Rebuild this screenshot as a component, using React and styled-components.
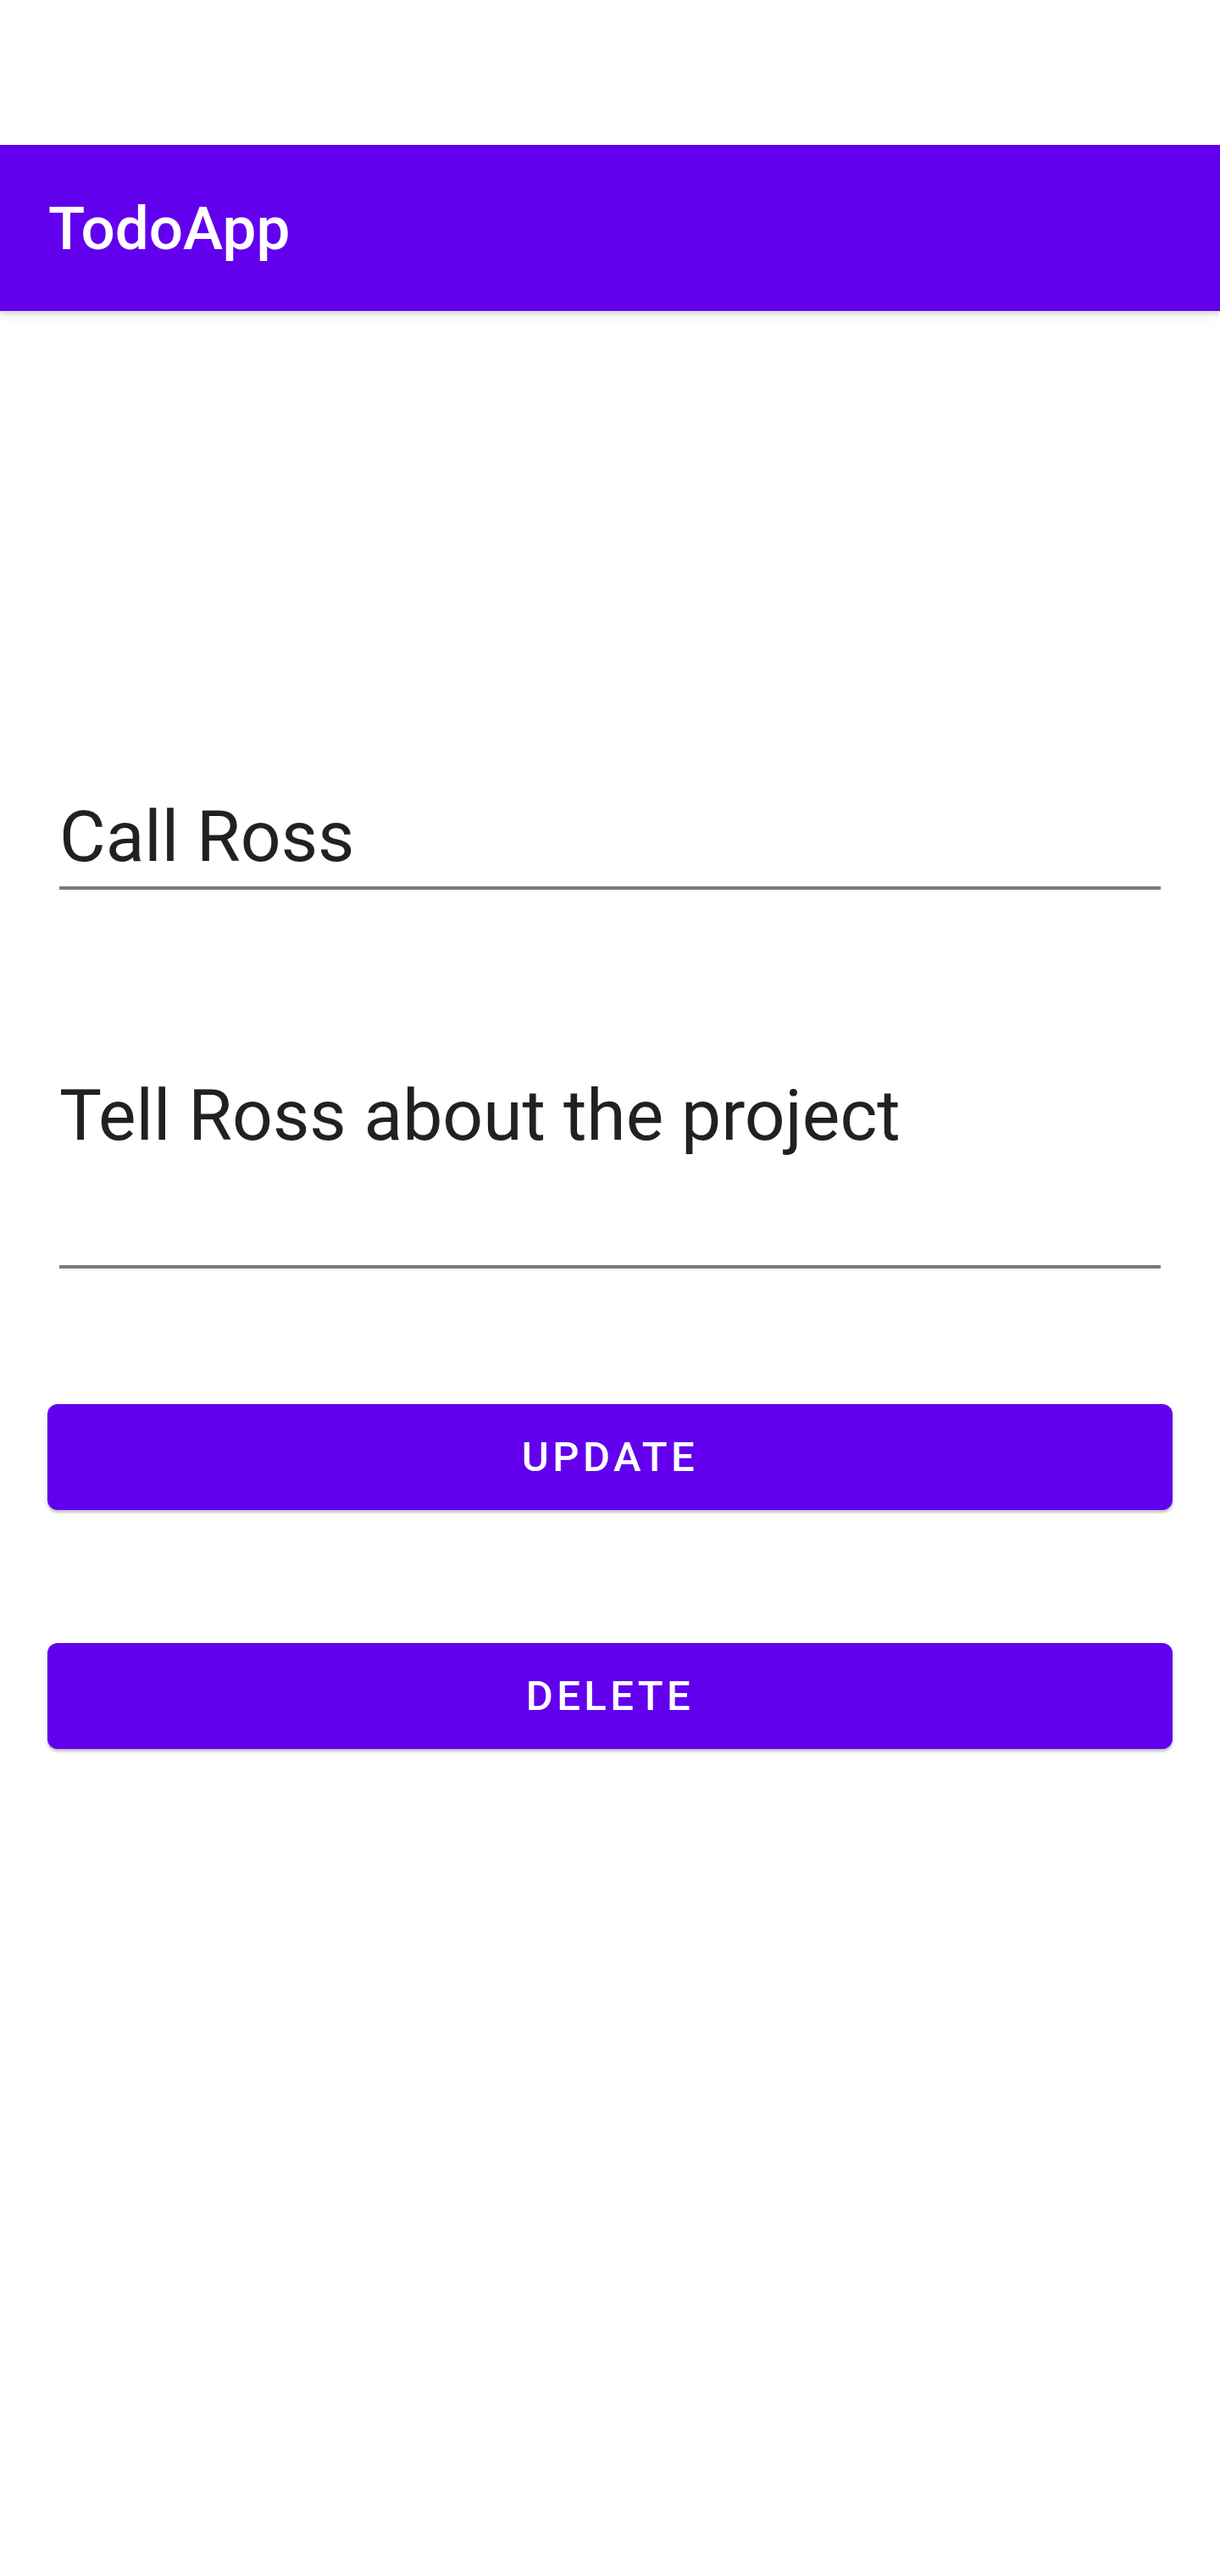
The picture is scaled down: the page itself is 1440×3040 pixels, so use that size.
import styled, { createGlobalStyle } from "styled-components";

const GlobalStyle = createGlobalStyle`
  body {
    margin: 0;
    background: #ffffff;
    font-family: Roboto, "Liberation Sans", sans-serif;
  }
`;

const Screen = styled.div`
  min-height: 3040px;
  background: #ffffff;
`;

const StatusSpace = styled.div`
  height: 171px;
`;

const AppBar = styled.header`
  height: 196px;
  background: #6200ee;
  display: flex;
  align-items: center;
  padding-left: 57px;
  box-shadow: 0 3px 5px rgba(0, 0, 0, 0.12), 0 6px 14px rgba(0, 0, 0, 0.06);
  position: relative;
  z-index: 1;
`;

const AppTitle = styled.h1`
  margin: 0;
  color: #ffffff;
  font-size: 71px;
  font-weight: 500;
  line-height: 1;
`;

const Form = styled.main`
  display: flex;
  flex-direction: column;
  padding: 571px 56px 0;
`;

const Field = styled.div`
  margin: ${(p) => p.$top || 0}px 14px 0;
  border-bottom: 4px solid #7a7a7a;
`;

const TitleInput = styled.input`
  display: block;
  width: 100%;
  box-sizing: border-box;
  border: none;
  outline: none;
  padding: 0 0 10px;
  margin: 0;
  font-family: Roboto, "Liberation Sans", sans-serif;
  font-size: 84px;
  line-height: 98px;
  height: 108px;
  color: #212121;
  background: transparent;
`;

const BodyInput = styled.textarea`
  display: block;
  width: 100%;
  box-sizing: border-box;
  border: none;
  outline: none;
  resize: none;
  overflow: hidden;
  padding: 0;
  margin: 0;
  font-family: Roboto, "Liberation Sans", sans-serif;
  font-size: 84px;
  line-height: 98px;
  height: 225px;
  color: #212121;
  background: transparent;
`;

const Button = styled.button`
  margin-top: ${(p) => p.$top}px;
  height: 125px;
  border: none;
  border-radius: 12px;
  background: #6200ee;
  color: #ffffff;
  font-family: Roboto, "Liberation Sans", sans-serif;
  font-size: 49px;
  font-weight: 500;
  letter-spacing: 0.09em;
  text-transform: uppercase;
  box-shadow: 0 3px 3px rgba(0, 0, 0, 0.2), 0 1px 6px rgba(0, 0, 0, 0.1);
  cursor: pointer;
`;

const App = () => {
  return (
    <Screen>
      <GlobalStyle />
      <StatusSpace />
      <AppBar>
        <AppTitle>TodoApp</AppTitle>
      </AppBar>
      <Form>
        <Field>
          <TitleInput defaultValue="Call Ross" />
        </Field>
        <Field $top={218}>
          <BodyInput rows={2} defaultValue="Tell Ross about the project" />
        </Field>
        <Button $top={160}>Update</Button>
        <Button $top={157}>Delete</Button>
      </Form>
    </Screen>
  );
};

export default App;
